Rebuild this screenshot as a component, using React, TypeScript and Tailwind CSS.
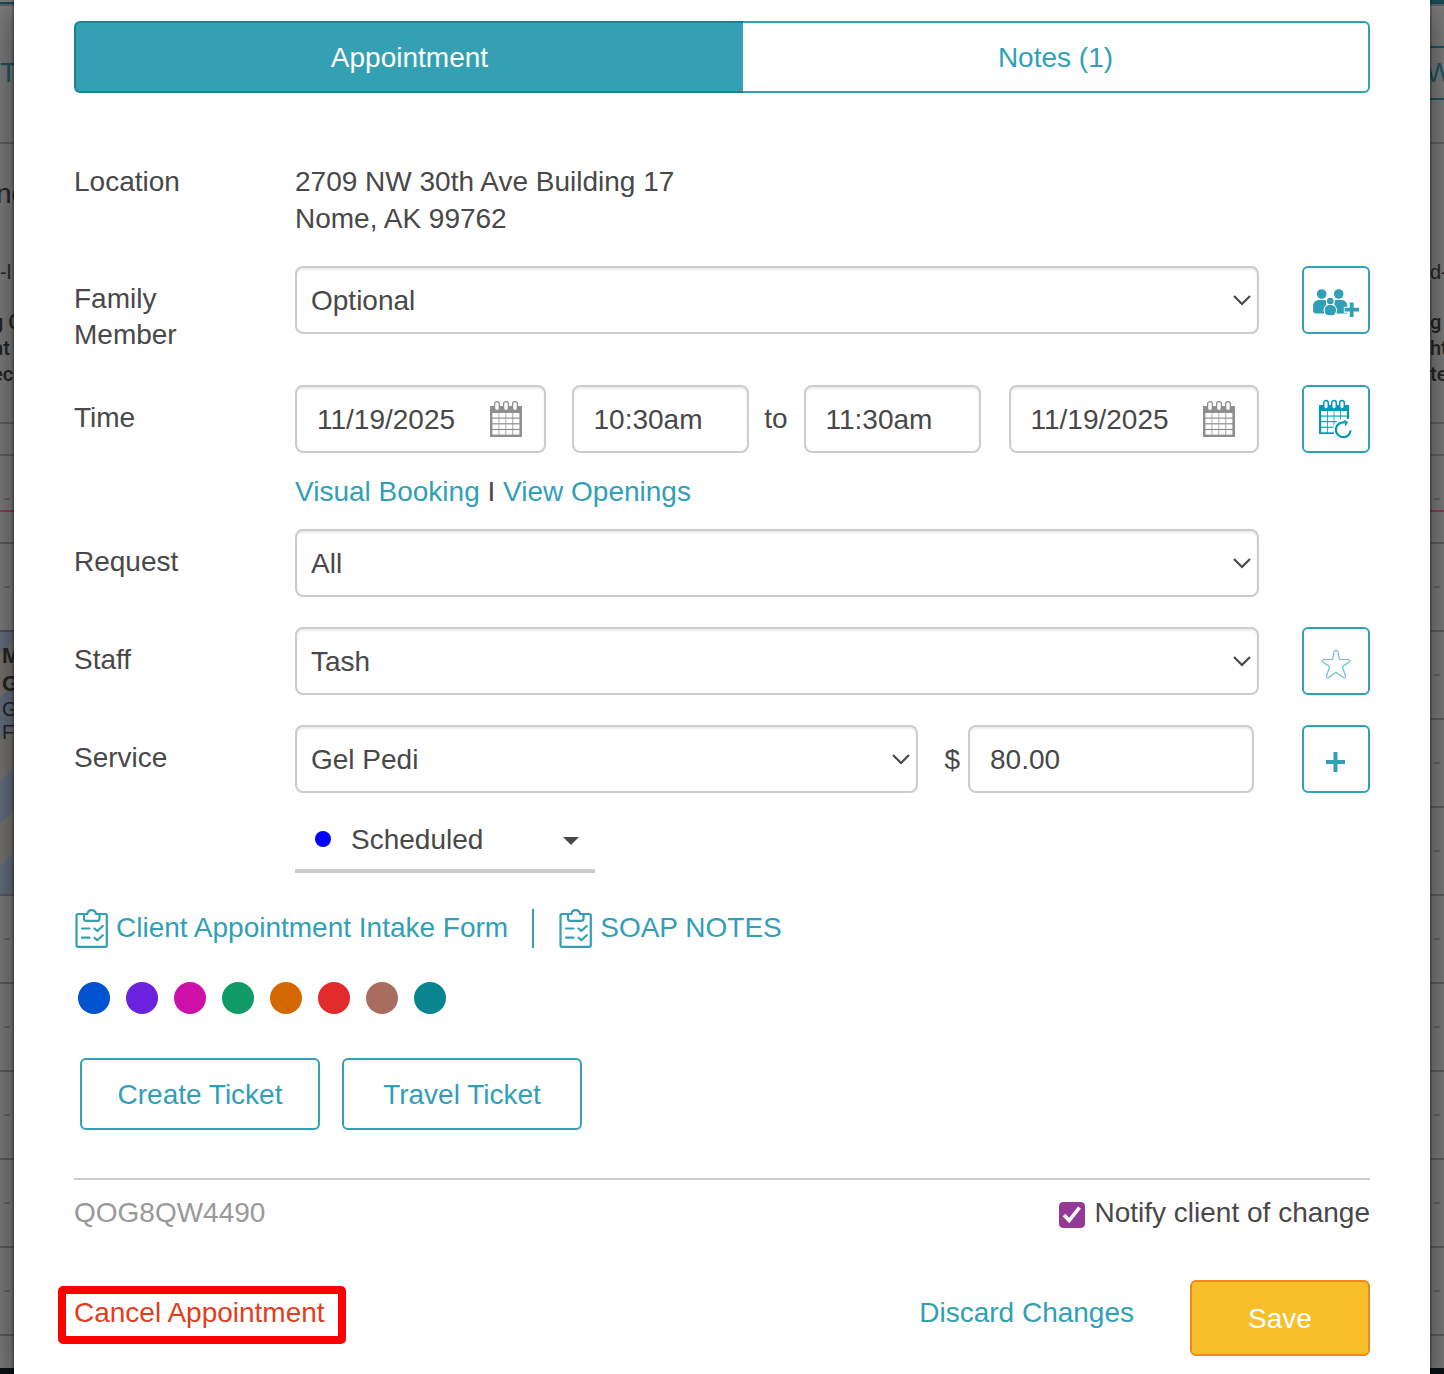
import type { ReactNode } from 'react';
import clsx from 'clsx';

const SWATCHES = [
  { name: 'Blue', color: 'bg-[#0052cf]' },
  { name: 'Purple', color: 'bg-[#6b22e0]' },
  { name: 'Pink', color: 'bg-[#cf10a8]' },
  { name: 'Green', color: 'bg-[#0f9a68]' },
  { name: 'Orange', color: 'bg-[#d46800]' },
  { name: 'Red', color: 'bg-[#e22b2b]' },
  { name: 'Brown', color: 'bg-[#a96d60]' },
  { name: 'Teal', color: 'bg-[#08858f]' },
];

const FIELD =
  'h-[68px] w-full min-w-0 rounded-lg border-2 border-[#ccc] bg-white pt-0.5 shadow-[inset_0_2px_2px_rgba(0,0,0,0.075)] outline-none';

const CalendarIcon = () => (
  <svg width="32" height="36" viewBox="0 0 32 36" aria-hidden="true">
    <path d="M0 5h32v31H0z" fill="#8f8f8f" />
    {[2.4, 9.3, 16.2, 23.2].map((x) =>
      [12, 17.7, 23.4, 29.1].map((y) => (
        <rect key={`${x}-${y}`} x={x} y={y} width="6.2" height="4.5" fill="#fff" />
      )),
    )}
    {[7, 16, 25].map((x) => (
      <rect key={x} x={x - 2.4} y="0.7" width="4.8" height="9" rx="2.4" fill="#fff" stroke="#8f8f8f" strokeWidth="1.3" />
    ))}
  </svg>
);

const RescheduleIcon = () => (
  <svg width="34" height="40" viewBox="0 0 34 40" aria-hidden="true">
    <path d="M0 6h30v29H0z" fill="#0099b8" />
    {[2.2, 8.8, 15.4, 22].map((x) =>
      [12, 17.6, 23.2, 28.8].map((y) => (
        <rect key={`${x}-${y}`} x={x} y={y} width="5.8" height="4.5" fill="#fff" />
      )),
    )}
    {[7, 15, 23].map((x) => (
      <rect key={x} x={x - 2.3} y="1.5" width="4.6" height="8.6" rx="2.3" fill="#fff" stroke="#0099b8" strokeWidth="1.5" />
    ))}
    <path d="M14 31a11 11 0 0 1 11-11h9v20H17z" fill="#fff" />
    <path d="M31.6 31.5a7.4 7.4 0 1 1-6-8" fill="none" stroke="#0099b8" strokeWidth="2.2" />
    <path d="M25 20.8l4 2.3-2.6 4.4z" fill="#0099b8" />
  </svg>
);

const FamilyIcon = () => (
  <svg width="46" height="29" viewBox="0 0 46 29" fill="#319fb6" aria-hidden="true">
    <circle cx="8.7" cy="5" r="4.8" />
    <circle cx="25.7" cy="5" r="4.8" />
    <path d="M0 17.5C0 13 3 11 6.500 11h4.600c1.600 0 2 .6 2 2.200v11.300H4C1.200 24.500 0 23.500 0 21z" />
    <path d="M21.500 13.200c0-1.600.5-2.200 2-2.200H28c3.600 0 6.400 2 6.400 6.500v7H21.500z" />
    <circle cx="17.300" cy="12" r="4.300" fill="#fff" />
    <ellipse cx="17.300" cy="21.200" rx="6.800" ry="6.400" fill="#fff" />
    <circle cx="17.300" cy="12" r="3.300" />
    <path d="M11.700 20.700c0-3 2.200-4.700 5.600-4.700s5.700 1.700 5.700 4.700c0 4-1.500 5.600-5.700 5.600s-5.600-1.600-5.600-5.600z" />
    <path d="M30.800 20.700H46M38.700 13V28.500" stroke="#fff" strokeWidth="6" />
    <path d="M31.600 20.700H46M38.700 13.500V28" stroke="#319fb6" strokeWidth="3.800" />
  </svg>
);

const StarIcon = () => (
  <svg width="30" height="30" viewBox="0 0 30 30" aria-hidden="true">
    <path
      d="M13 3c.5-2.300 3.500-2.300 4 0l1.500 7.500h8.500c2 0 2.300 1.800.8 2.800L21.300 17.700l3.200 9c.5 1.800-1 2.600-2.500 1.600L15 23.300l-7 5c-1.500 1-3 .2-2.500-1.600l3.200-9-6.500-4.400c-1.500-1-1.200-2.800.8-2.800h8.500z"
      fill="none"
      stroke="#6fbccb"
      strokeWidth="1.2"
      strokeLinejoin="round"
    />
  </svg>
);

const PlusIcon = () => (
  <svg width="20" height="20" viewBox="0 0 20 20" aria-hidden="true">
    <path d="M0 10h19M9.500 0v20" stroke="#319fb6" strokeWidth="4" />
  </svg>
);

const ClipboardIcon = () => (
  <svg
    width="33"
    height="39"
    viewBox="0 0 33 39"
    fill="none"
    stroke="#319fb6"
    strokeWidth="2.2"
    strokeLinecap="round"
    strokeLinejoin="round"
    aria-hidden="true"
  >
    <path d="M9 5H3Q1.500 5 1.500 6.500V36Q1.500 37.800 3 37.800H30.300Q31.800 37.800 31.800 36V6.500Q31.800 5 30.300 5H24.500" />
    <path d="M9 5H12.300Q13 1.200 16.700 1.200T21 5H24.500V9.500Q24.500 11.800 22.500 11.800H11Q9 11.800 9 9.500z" />
    <path d="M7 19.500H14.500M7 28.700H14.500M19.500 19.500l2.800 2.500 5.500-5M19.500 28.700l2.800 2.500 5.500-5" />
  </svg>
);

const FormRow = ({
  label,
  htmlFor,
  action,
  className,
  children,
}: {
  label: string;
  htmlFor: string;
  action?: ReactNode;
  className?: string;
  children: ReactNode;
}) => (
  <div className={clsx('flex items-start', className)}>
    <label htmlFor={htmlFor} className="w-[221px] shrink-0 pt-[15px] pr-20">
      {label}
    </label>
    <div className="min-w-0 flex-1">{children}</div>
    <div className="ml-[43px] w-[68px] shrink-0">{action}</div>
  </div>
);

const ActionButton = ({ label, className, children }: { label: string; className?: string; children: ReactNode }) => (
  <button
    type="button"
    aria-label={label}
    className={clsx(
      'flex h-[68px] w-[68px] items-center justify-center rounded-md border-2 border-[#319fb6] bg-white',
      className,
    )}
  >
    {children}
  </button>
);

const Select = ({ id, value }: { id: string; value: string }) => (
  <div className="relative flex-1">
    <select id={id} defaultValue={value} className={clsx(FIELD, 'appearance-none pr-12 pl-3.5')}>
      <option>{value}</option>
    </select>
    <svg
      className="pointer-events-none absolute top-7 right-[7px]"
      width="20"
      height="12"
      viewBox="0 0 20 12"
      fill="none"
      stroke="#484848"
      strokeWidth="2.2"
      aria-hidden="true"
    >
      <path d="M2 2l8 8 8-8" />
    </svg>
  </div>
);

const DateInput = ({ id, label }: { id: string; label: string }) => (
  <div className="relative min-w-0 flex-1">
    <input id={id} type="text" aria-label={label} defaultValue="11/19/2025" className={clsx(FIELD, 'pr-16 pl-5')} />
    <span className="pointer-events-none absolute top-4 right-6">
      <CalendarIcon />
    </span>
  </div>
);

const TimeInput = ({ label, value }: { label: string; value: string }) => (
  <div className="w-[177px]">
    <input type="text" aria-label={label} defaultValue={value} className={clsx(FIELD, 'px-5')} />
  </div>
);

const Slot = () => (
  <div className="flex h-[88px] shrink-0 items-center border-t-2 border-[#5c5c5c] px-1">
    <span className="h-[2px] w-1.5 bg-[#636363]" />
  </div>
);

// The dimmed calendar page that shows on both sides of the dialog
const Backdrop = ({ side }: { side: 'left' | 'right' }) => {
  const left = side === 'left';
  return (
    <div
      aria-hidden="true"
      className="flex w-3.5 shrink-0 flex-col overflow-hidden bg-[#7b7b7b] text-[20px] leading-[26px] font-medium whitespace-nowrap text-[#252525]"
    >
      <div className={clsx('h-1 shrink-0 border-[#154b56]', left ? 'border-b-2' : 'border-b-4')} />
      <div className="h-[2px] shrink-0 bg-[#5f5f5f]" />
      <div
        className={clsx(
          'mt-10 mb-[42px] h-[54px] shrink-0 text-[28px] font-normal text-[#1a5663]',
          left ? 'leading-[54px]' : '-ml-1 border-y-2 border-[#1a5663] leading-[50px]',
        )}
      >
        {left ? 'Te' : 'W'}
      </div>
      <div className="h-[2px] shrink-0 bg-[#606060]" />
      <div className="h-[115px] shrink-0 pt-[34px] text-[28px] leading-[32px]">
        {left && <p className="-ml-1">ne</p>}
      </div>
      <div className="h-[50px] shrink-0">{left ? '-l' : 'd-'}</div>
      <div className={clsx("h-[113px] shrink-0 font-['Roboto',sans-serif]", left && '-ml-2')}>
        <p>{left ? 'g C' : 'g'}</p>
        <p>{left ? 'nt' : 'ht'}</p>
        <p>{left ? 'ec' : 'te'}</p>
      </div>
      <div className="h-8 shrink-0 border-t-2 border-[#606060]" />
      <div className="flex h-[56px] shrink-0 items-end border-t-2 border-[#606060] px-1 pb-2.5">
        <span className="h-[2px] w-1.5 bg-[#636363]" />
      </div>
      <div className="h-8 shrink-0 border-t-2 border-[#8c3f52]" />
      <Slot />
      {left ? (
        <div className="h-[264px] shrink-0 border-t-2 border-[#4c5058] bg-[repeating-linear-gradient(135deg,#646c7d_0px,#646c7d_16px,#74736f_16px,#74736f_46px,#646c7d_46px,#646c7d_60px)] pt-2.5 pl-0.5">
          <p className="text-[22px] leading-7 font-bold">M</p>
          <p className="text-[22px] leading-7 font-bold">G</p>
          <p className="leading-[23px] font-light">G</p>
          <p className="leading-[23px] font-light">F</p>
        </div>
      ) : (
        <>
          <Slot />
          <Slot />
          <Slot />
        </>
      )}
      <Slot />
      <Slot />
      <Slot />
      <Slot />
      <Slot />
      <div className="h-[34px] shrink-0 border-t-2 border-[#5c5c5c]" />
      <div className="min-h-1 flex-1 bg-[#0b1213]" />
    </div>
  );
};

const AppointmentDialog = () => (
  <main className="relative z-10 min-w-0 flex-1 bg-white px-[60px] pt-[21px] pb-[18px] shadow-[0_0_0_2px_rgba(0,0,0,0.2),0_10px_30px_rgba(0,0,0,0.5)]">
    <div role="tablist" className="flex h-[72px]">
      <button
        type="button"
        role="tab"
        aria-selected="true"
        className="flex-[669] rounded-l-md border-2 border-r-0 border-[#217f90] bg-[#34a0b4] pt-0.5 text-white"
      >
        Appointment
      </button>
      <button
        type="button"
        role="tab"
        aria-selected="false"
        className="flex-[627] rounded-r-md border-2 border-l-0 border-[#319fb6] pt-0.5 text-[#319fb6]"
      >
        Notes (1)
      </button>
    </div>

    <form onSubmit={(e) => e.preventDefault()}>
      {/* Location */}
      <div className="mt-[70px] flex leading-[37px]">
        <span className="w-[221px] shrink-0">Location</span>
        <address className="not-italic">
          2709 NW 30th Ave Building 17
          <br />
          Nome, AK 99762
        </address>
      </div>

      <FormRow
        label="Family Member"
        htmlFor="family"
        className="mt-[29px]"
        action={
          <ActionButton label="Add family member" className="pt-1.5">
            <FamilyIcon />
          </ActionButton>
        }
      >
        <Select id="family" value="Optional" />
      </FormRow>

      {/* Time */}
      <FormRow
        label="Time"
        htmlFor="start-date"
        className="mt-8"
        action={
          <ActionButton label="Reschedule">
            <RescheduleIcon />
          </ActionButton>
        }
      >
        <div className="flex items-center">
          <DateInput id="start-date" label="Start date" />
          <div className="ml-[26px] flex items-center">
            <TimeInput label="Start time" value="10:30am" />
            <span className="w-[55px] text-center">to</span>
            <TimeInput label="End time" value="11:30am" />
          </div>
          <div className="ml-7 flex min-w-0 flex-1">
            <DateInput id="end-date" label="End date" />
          </div>
        </div>
        <p className="mt-[21px]">
          <a href="#visual-booking" className="text-[#319fb6]">
            Visual Booking
          </a>{' '}
          I{' '}
          <a href="#openings" className="text-[#319fb6]">
            View Openings
          </a>
        </p>
      </FormRow>

      <FormRow label="Request" htmlFor="request" className="mt-[19px]">
        <Select id="request" value="All" />
      </FormRow>

      <FormRow
        label="Staff"
        htmlFor="staff"
        className="mt-[30px]"
        action={
          <ActionButton label="Favorite staff" className="pt-1.5">
            <StarIcon />
          </ActionButton>
        }
      >
        <Select id="staff" value="Tash" />
      </FormRow>

      {/* Service, price and status */}
      <FormRow
        label="Service"
        htmlFor="service"
        className="mt-[30px]"
        action={
          <ActionButton label="Add service" className="pt-1.5">
            <PlusIcon />
          </ActionButton>
        }
      >
        <div className="flex items-center pr-[5px]">
          <Select id="service" value="Gel Pedi" />
          <label htmlFor="price" className="w-[50px] pt-0.5 pr-2 text-right">
            $
          </label>
          <div className="w-[286px]">
            <input id="price" type="text" defaultValue="80.00" className={clsx(FIELD, 'px-5')} />
          </div>
        </div>
        <div className="relative mt-3 h-[68px] w-[300px] border-b-4 border-[#ccc]">
          <select
            aria-label="Status"
            defaultValue="Scheduled"
            className="h-full w-full appearance-none bg-transparent pt-1.5 pl-14 outline-none"
          >
            <option>Scheduled</option>
          </select>
          <span className="pointer-events-none absolute top-[26px] left-5 h-4 w-4 rounded-full bg-[#0000ff]" />
          <svg
            className="pointer-events-none absolute top-8 right-4"
            width="16"
            height="8"
            viewBox="0 0 16 8"
            fill="#484848"
            aria-hidden="true"
          >
            <path d="M0 0h16l-8 8z" />
          </svg>
        </div>
      </FormRow>

      {/* Client forms */}
      <div className="mt-9 flex h-[39px] items-center pl-px text-[#319fb6]">
        <a href="#intake" className="flex items-center gap-2 border-r-2 border-[#319fb6] pr-6">
          <ClipboardIcon />
          <span className="pb-0.5">Client Appointment Intake Form</span>
        </a>
        <a href="#soap" className="flex items-center gap-2 pl-[25px]">
          <ClipboardIcon />
          <span className="pb-0.5">SOAP NOTES</span>
        </a>
      </div>

      <div className="mt-[34px] flex gap-4 pl-1">
        {SWATCHES.map((s) => (
          <button key={s.name} type="button" aria-label={s.name} className={clsx('h-8 w-8 rounded-full', s.color)} />
        ))}
      </div>

      <div className="mt-11 flex gap-[22px] pl-1.5 text-[#319fb6]">
        <button type="button" className="h-[72px] w-60 rounded-md border-2 border-[#319fb6] pt-0.5">
          Create Ticket
        </button>
        <button type="button" className="h-[72px] w-60 rounded-md border-2 border-[#319fb6] pt-0.5">
          Travel Ticket
        </button>
      </div>

      <div className="mt-12 flex justify-between border-t-2 border-[#ccc] pt-[15px]">
        <span className="text-[#999]">QOG8QW4490</span>
        <label className="flex items-center gap-2.5">
          <span className="relative mt-1 h-[26px] w-[26px]">
            <input
              type="checkbox"
              defaultChecked
              className="block h-[26px] w-[26px] appearance-none rounded border border-[#943a96] bg-white checked:bg-[#943a96]"
            />
            <svg
              className="pointer-events-none absolute inset-0"
              width="26"
              height="26"
              viewBox="0 0 26 26"
              fill="none"
              stroke="#fff"
              strokeWidth="3.6"
              aria-hidden="true"
            >
              <path d="M5 13l5.200 5.500L20.500 5.500" />
            </svg>
          </span>
          Notify client of change
        </label>
      </div>

      <div className="mt-[49px] flex items-center justify-between">
        <a
          href="#cancel"
          className="-mx-4 mb-[6px] h-[58px] rounded-[5px] border-8 border-[#ff0000] pt-px pr-[13px] pl-2 text-[#e23e1b]"
        >
          Cancel Appointment
        </a>
        <div className="flex items-center gap-14">
          <button type="button" className="mb-2.5 text-[#319fb6]">
            Discard Changes
          </button>
          <button
            type="submit"
            className="h-[76px] w-[180px] rounded-md border-2 border-[#f08a1c] bg-[#f7bf2a] pt-0.5 text-white"
          >
            Save
          </button>
        </div>
      </div>
    </form>
  </main>
);

export default function App() {
  return (
    <div className="flex min-h-screen overflow-hidden font-['Liberation_Sans',Arial,sans-serif] text-[28px] leading-9 text-[#484848]">
      <Backdrop side="left" />
      <AppointmentDialog />
      <Backdrop side="right" />
    </div>
  );
}
